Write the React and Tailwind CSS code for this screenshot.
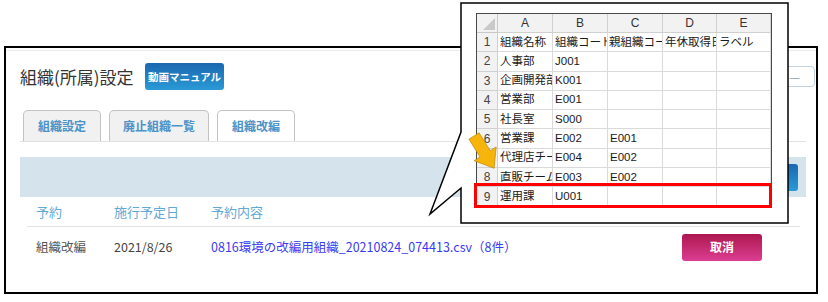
export default function App() {
  const rows = [
    ['組織名称', '組織コード', '親組織コード', '年休取得日', 'ラベル'],
    ['人事部', 'J001', '', '', ''],
    ['企画開発部', 'K001', '', '', ''],
    ['営業部', 'E001', '', '', ''],
    ['社長室', 'S000', '', '', ''],
    ['営業課', 'E002', 'E001', '', ''],
    ['代理店チーム', 'E004', 'E002', '', ''],
    ['直販チーム', 'E003', 'E002', '', ''],
    ['運用課', 'U001', '', '', ''],
  ];
  const colW = ['w-[55px]', 'w-[55px]', 'w-[55px]', 'w-[54px]', 'w-[54px]'];
  const letters = ['A', 'B', 'C', 'D', 'E'];

  return (
    <div className="relative w-[828px] h-[302px] bg-white overflow-hidden pt-[46px] pl-[4px] [font-family:'Noto_Sans_CJK_JP','Noto_Sans',sans-serif]">
      {/* main panel */}
      <div className="w-[814px] h-[248px] border-2 border-black">
        <div className="h-[3px] border-b border-[#ececec]" />
        {/* title row */}
        <div className="mt-[12px] h-[27px] flex items-center pl-[14px] pr-[1px]">
          <div className="w-[125px] text-[17px] text-[#333] leading-none whitespace-nowrap">組織(所属)設定</div>
          <div className="w-[79px] h-[27px] rounded-[3px] bg-linear-to-b from-[#1b68b0] to-[#2b9ad6] flex items-center justify-center text-white text-[10.5px] font-bold whitespace-nowrap">
            動画マニュアル
          </div>
          <div className="ml-auto w-[120px] h-[21px] rounded-[4px] border border-[#c4d2de] flex items-center justify-end pr-[14px]">
            <span className="text-[#8a98a6] text-[12px] leading-none">—</span>
          </div>
        </div>
        {/* tabs */}
        <div className="mt-[20px] ml-[14px] mr-[10px] flex items-end gap-[8px] pl-[3px] border-b border-[#e2e2e2]">
          <div className="w-[78px] h-[31px] rounded-t-[5px] border border-b-0 border-[#c3c3c3] bg-[#f1f1f1] flex items-center justify-center text-[12px] font-bold text-[#4b93c9]">組織設定</div>
          <div className="w-[100px] h-[31px] rounded-t-[5px] border border-b-0 border-[#c3c3c3] bg-[#f1f1f1] flex items-center justify-center text-[12px] font-bold text-[#4b93c9]">廃止組織一覧</div>
          <div className="w-[78px] h-[31px] rounded-t-[5px] border border-b-0 border-[#c3c3c3] bg-white flex items-center justify-center text-[12px] font-bold text-[#4b93c9]">組織改編</div>
        </div>
        {/* blue bar */}
        <div className="mt-[15px] ml-[14px] mr-[10px] h-[40px] bg-[#d5e3ed] flex items-center justify-end">
          <div className="w-[80px] h-[27px] mr-[8px] rounded-[3px] bg-linear-to-b from-[#1b68b0] to-[#2b9ad6]" />
        </div>
        {/* header row */}
        <div className="ml-[21px] w-[773px] h-[30px] border-b border-[#e2e2e2] flex items-center text-[13px] text-[#62a9d6] whitespace-nowrap">
          <div className="w-[87px] pl-[9px]">予約</div>
          <div className="w-[97px]">施行予定日</div>
          <div>予約内容</div>
        </div>
        {/* data row */}
        <div className="ml-[21px] w-[773px] h-[40px] flex items-center text-[12.5px] whitespace-nowrap">
          <div className="w-[87px] pl-[9px] text-[#555]">組織改編</div>
          <div className="w-[97px] text-[#444]">2021/8/26</div>
          <div className="text-[#3b3bf2]">0816環境の改編用組織_20210824_074413.csv（8件）</div>
          <div className="ml-auto mr-[38px] w-[80px] h-[27px] rounded-[3px] bg-linear-to-b from-[#ad154f] to-[#dc3d92] flex items-center justify-center text-white text-[12px] font-bold">
            取消
          </div>
        </div>
      </div>

      {/* callout shape */}
      <svg className="absolute left-0 top-0" width="828" height="302" viewBox="0 0 828 302">
        <path d="M461 3 H788 V223 H461 V188 L430 214 L461 132 Z" fill="#ffffff" stroke="#000000" strokeWidth="1.5" strokeLinejoin="miter" />
      </svg>

      {/* spreadsheet */}
      <div className="absolute left-[476px] top-[13px] w-[296px] border-l border-r border-t border-[#4a4a4a] bg-white text-[11.5px] text-[#1a1a1a] [font-family:'Liberation_Sans','Noto_Sans_CJK_JP',sans-serif]">
        <div className="flex h-[19px] bg-[#f2f2f2]">
          <div className="w-[21px] border-r border-b border-[#c8c8c8] relative">
            <svg className="absolute right-[2px] bottom-[2px]" width="12" height="12" viewBox="0 0 12 12">
              <polygon points="12,0 12,12 0,12" fill="#c9c9c9" />
            </svg>
          </div>
          {letters.map((l, i) => (
            <div key={l} className={`${colW[i]} border-r border-b border-[#d0d0d0] flex items-center justify-center text-[#333] text-[12px]`}>{l}</div>
          ))}
        </div>
        {rows.map((r, ri) => (
          <div key={ri} className="flex h-[19.3px]">
            <div className="w-[21px] bg-[#f2f2f2] border-r border-b border-[#d0d0d0] flex items-center justify-center text-[#444] text-[12px]">{ri + 1}</div>
            {r.map((c, ci) => (
              <div key={ci} className={`${colW[ci]} border-r border-b border-[#dadada] flex items-center overflow-hidden whitespace-nowrap pl-[2px]`}>
                {ri === 0 && ci === 2 ? (
                  <span className="inline-block w-[2px] h-[12px] bg-[#f5c283] mr-[1px] -ml-[2px]" />
                ) : null}
                {c}
              </div>
            ))}
          </div>
        ))}
      </div>

      {/* red highlight */}
      <div className="absolute left-[474px] top-[183px] w-[298px] h-[25px] border-[3px] border-[#ff0000]" />

      {/* yellow arrow */}
      <svg className="absolute left-0 top-0" width="828" height="302" viewBox="0 0 828 302">
        <polygon
          points="0,-6 21,-6 21,-13 38,0 21,13 21,6 0,6"
          transform="translate(474 136) rotate(58)"
          fill="#f7b50c"
          stroke="#b98500"
          strokeWidth="0.6"
        />
      </svg>
    </div>
  );
}
